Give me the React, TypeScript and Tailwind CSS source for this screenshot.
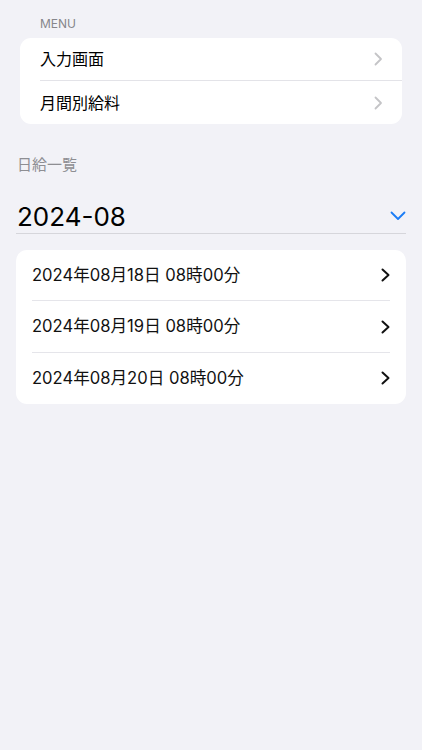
import React from "react";

const font = { fontFamily: '"Inter", "Noto Sans CJK JP", sans-serif' };

function GrayChevron() {
  return (
    <svg width="9" height="14" viewBox="0 0 9 14" fill="none">
      <polyline points="1.5,1.5 7,7 1.5,12.5" stroke="#c4c4c7" strokeWidth="1.8" strokeLinecap="round" strokeLinejoin="round" />
    </svg>
  );
}

function BlackChevron() {
  return (
    <svg width="9" height="14" viewBox="0 0 9 14" fill="none">
      <polyline points="1.5,1.5 7.5,7 1.5,12.5" stroke="#111" strokeWidth="2" strokeLinecap="round" strokeLinejoin="round" />
    </svg>
  );
}

function BlueChevron() {
  return (
    <svg width="16" height="10" viewBox="0 0 16 10" fill="none">
      <polyline points="1.5,1.5 8,8 14.5,1.5" stroke="#1a7cf5" strokeWidth="1.8" strokeLinecap="round" strokeLinejoin="round" />
    </svg>
  );
}

export default function App() {
  const menu = ["入力画面", "月間別給料"];
  const days = ["18", "19", "20"];
  return (
    <div className="min-h-[750px] w-full bg-[#f2f2f7]" style={font}>
      <div className="pt-[16px] pl-[40px] text-[12px] leading-[16px] text-[#86868b]">MENU</div>
      <div className="mx-5 mt-[6px] rounded-[11px] bg-white">
        {menu.map((m, i) => (
          <div key={m} className="pl-5">
            <div className={`flex h-[43px] items-center justify-between pr-[19px] ${i === 0 ? "border-b border-[#e3e3e8]" : ""}`}>
              <span className="text-[16px] text-black">{m}</span>
              <GrayChevron />
            </div>
          </div>
        ))}
      </div>

      <div className="mt-[31px] pl-[17px] text-[15px] leading-[20px] text-[#8e8e93]">日給一覧</div>

      <div className="mx-4 mt-[25px] flex h-[34px] items-center justify-between border-b border-[#d6d6db] pl-[1px]">
        <span className="text-[26px] leading-[34px] text-black">2024-08</span>
        <span className="pb-[1px]"><BlueChevron /></span>
      </div>

      <div className="mx-4 mt-[16px] rounded-[11px] bg-white px-4">
        {days.map((d, i) => (
          <div key={d} className={`flex h-[51.4px] items-center justify-between ${i < 2 ? "border-b border-[#e5e5ea]" : ""}`}>
            <span className="text-[16.6px] text-[#111]">2024年08月{d}日 08時00分</span>
            <BlackChevron />
          </div>
        ))}
      </div>
    </div>
  );
}
